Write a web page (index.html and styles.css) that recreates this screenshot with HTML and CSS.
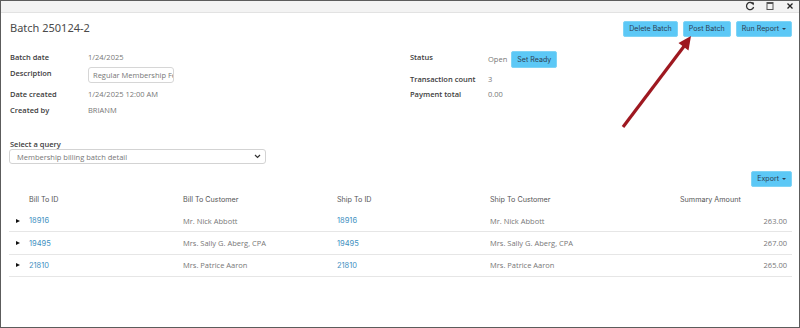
FILE: index.html
```html
<!DOCTYPE html>
<html>
<head>
<meta charset="utf-8">
<link rel="stylesheet" href="styles.css">
</head>
<body>
<div class="frame">
  <div class="topbar">
    <svg class="ticon" width="10" height="10" viewBox="0 0 10 10"><path d="M8.2 3.2A3.6 3.6 0 1 0 8.6 6" fill="none" stroke="#333" stroke-width="1.3"/><path d="M6.2 1.2L9 1.6 8.6 4.4Z" fill="#333"/></svg>
    <svg class="ticon" width="10" height="10" viewBox="0 0 10 10"><rect x="2" y="1.5" width="6" height="7" fill="none" stroke="#555" stroke-width="1"/><line x1="2" y1="2.5" x2="8" y2="2.5" stroke="#555" stroke-width="1"/></svg>
    <svg class="ticon" width="10" height="10" viewBox="0 0 10 10"><path d="M2.5 2.5L7.5 7.5M7.5 2.5L2.5 7.5" stroke="#222" stroke-width="1.3"/></svg>
  </div>
  <div class="content">
    <div class="header">
      <h1 class="title">Batch 250124-2</h1>
      <div class="actions">
        <button class="btn">Delete Batch</button>
        <button class="btn">Post Batch</button>
        <button class="btn">Run Report <span class="caret"></span></button>
      </div>
    </div>
    <div class="details">
      <div class="col">
        <div class="row r1"><span class="lbl">Batch date</span><span class="val">1/24/2025</span></div>
        <div class="row r2"><span class="lbl">Description</span><span class="input"><span class="inputtext">Regular Membership Fe</span></span></div>
        <div class="row r3"><span class="lbl">Date created</span><span class="val">1/24/2025 12:00 AM</span></div>
        <div class="row r4"><span class="lbl">Created by</span><span class="val">BRIANM</span></div>
      </div>
      <div class="col">
        <div class="row s1"><span class="lbl">Status</span><span class="val open">Open</span><button class="btn small">Set Ready</button></div>
        <div class="row s2"><span class="lbl">Transaction count</span><span class="val">3</span></div>
        <div class="row s3"><span class="lbl">Payment total</span><span class="val">0.00</span></div>
      </div>
    </div>
    <div class="query">
      <div class="qlabel">Select a query</div>
      <div class="select"><span>Membership billing batch detail</span><svg width="7" height="5" viewBox="0 0 7 5"><path d="M1 1L3.5 3.5 6 1" fill="none" stroke="#333" stroke-width="1.2"/></svg></div>
    </div>
    <div class="exportrow"><button class="btn">Export <span class="caret"></span></button></div>
    <div class="table">
      <div class="trow thead">
        <span></span><span>Bill To ID</span><span>Bill To Customer</span><span>Ship To ID</span><span>Ship To Customer</span><span>Summary Amount</span>
      </div>
      <div class="trow body">
        <span class="tri"></span><span class="link">18916</span><span>Mr. Nick Abbott</span><span class="link">18916</span><span>Mr. Nick Abbott</span><span class="amt">263.00</span>
      </div>
      <div class="trow body">
        <span class="tri"></span><span class="link">19495</span><span>Mrs. Sally G. Aberg, CPA</span><span class="link">19495</span><span>Mrs. Sally G. Aberg, CPA</span><span class="amt">267.00</span>
      </div>
      <div class="trow body">
        <span class="tri"></span><span class="link">21810</span><span>Mrs. Patrice Aaron</span><span class="link">21810</span><span>Mrs. Patrice Aaron</span><span class="amt">265.00</span>
      </div>
    </div>
  </div>
  <svg class="arrow" width="800" height="328" viewBox="0 0 800 328">
    <line x1="623" y1="127" x2="685" y2="45" stroke="#9e1820" stroke-width="3.2" stroke-linecap="butt"/>
    <polygon points="691,36 688.5,50.5 678.5,43" fill="#9e1820"/>
  </svg>
</div>
</body>
</html>
```
FILE: styles.css
```css
* { box-sizing: border-box; }
html, body { margin: 0; padding: 0; background: #fff; }
body { font-family: "Open Sans", "Noto Sans", sans-serif; color: #444; }
.frame {
  position: relative;
  width: 800px;
  height: 328px;
  border: 1px solid #5c5c5c;
  overflow: hidden;
  display: flex;
  flex-direction: column;
}
.topbar {
  height: 12px;
  background: #f3f3f3;
  border-bottom: 1px solid #e2e2e2;
  display: flex;
  justify-content: flex-end;
  align-items: flex-start;
  gap: 10px;
  padding-right: 4px;
  flex-shrink: 0;
}
.ticon { display: block; }
.content { padding: 0 7px 0 8px; flex: 1; }
.header {
  display: flex;
  justify-content: space-between;
  align-items: flex-start;
  padding-top: 8px;
}
.title {
  margin: 0;
  font-family: "Noto Sans", sans-serif;
  font-weight: 400;
  font-size: 11px;
  line-height: 14px;
  color: #4a4a4a;
  padding-left: 1px;
}
.actions { display: flex; gap: 5px; }
.btn {
  font-family: "Inter", "Roboto", sans-serif;
  font-size: 7.1px;
  color: #2d3e52;
  background: #5cc8f6;
  border: 1px solid #7fd4f6;
  border-radius: 2px;
  height: 16px;
  padding: 0 5px;
  line-height: 14px;
  display: inline-flex;
  align-items: center;
  gap: 3px;
}
.caret {
  display: inline-block;
  width: 0; height: 0;
  border-left: 2px solid transparent;
  border-right: 2px solid transparent;
  border-top: 2.5px solid #2d3e52;
}
.details {
  display: grid;
  grid-template-columns: 400px 1fr;
  padding-left: 1px;
  margin-top: 14px;
}
.col { display: flex; flex-direction: column; }
.row { display: flex; align-items: flex-start; font-size: 7.5px; line-height: 12px; }
.lbl { width: 78px; color: #3d3d3d; font-weight: 600; }
.val { color: #777; }
.r1 { height: 12px; }
.r2 { margin-top: 4px; height: 17px; }
.r3 { margin-top: 4px; height: 12px; }
.r4 { margin-top: 4px; height: 12px; }
.input {
  width: 86px;
  height: 16px;
  border: 1px solid #d6d6d6;
  border-radius: 3px;
  padding: 1px 4px;
  line-height: 13px;
  color: #777;
  white-space: nowrap;
  overflow: hidden;
  display: block;
}
.inputtext { display: inline-block; }
.s1 { height: 17px; margin-top: 0; }
.s1 .open { margin-top: 2px; margin-right: 4px; }
.s1 .btn { height: 17px; padding: 0 5px; }
.s2 { margin-top: 5px; height: 12px; }
.s3 { margin-top: 3px; height: 12px; }
.query { margin-top: 23px; padding-left: 1px; }
.qlabel { font-size: 7.5px; line-height: 10px; color: #3d3d3d; font-weight: 600; }
.select {
  width: 257px;
  height: 15px;
  margin-left: -1px;
  border: 1px solid #d3d3d3;
  border-radius: 3px;
  display: flex;
  align-items: center;
  justify-content: space-between;
  padding: 0 4px 0 7px;
  font-size: 7.5px;
  color: #777;
}
.exportrow { display: flex; justify-content: flex-end; margin-top: 7px; }
.table { margin-top: 1px; }
.trow {
  display: grid;
  grid-template-columns: 20px 154px 154px 153px 190px 1fr;
  align-items: center;
  font-size: 7.5px;
}
.thead { height: 22px; font-family: "Inter", "Roboto", sans-serif; color: #555; font-size: 7.2px; }
.body { height: 22.4px; border-bottom: 1.5px solid #e6e6e6; color: #777; }
.link { color: #3e90bf; font-family: "Inter", "Roboto", sans-serif; }
.amt { text-align: right; padding-right: 5px; }
.tri {
  width: 0; height: 0;
  margin-left: 7px;
  border-top: 2.5px solid transparent;
  border-bottom: 2.5px solid transparent;
  border-left: 4px solid #111;
}
.arrow { position: absolute; left: -1px; top: -1px; pointer-events: none; }
```
